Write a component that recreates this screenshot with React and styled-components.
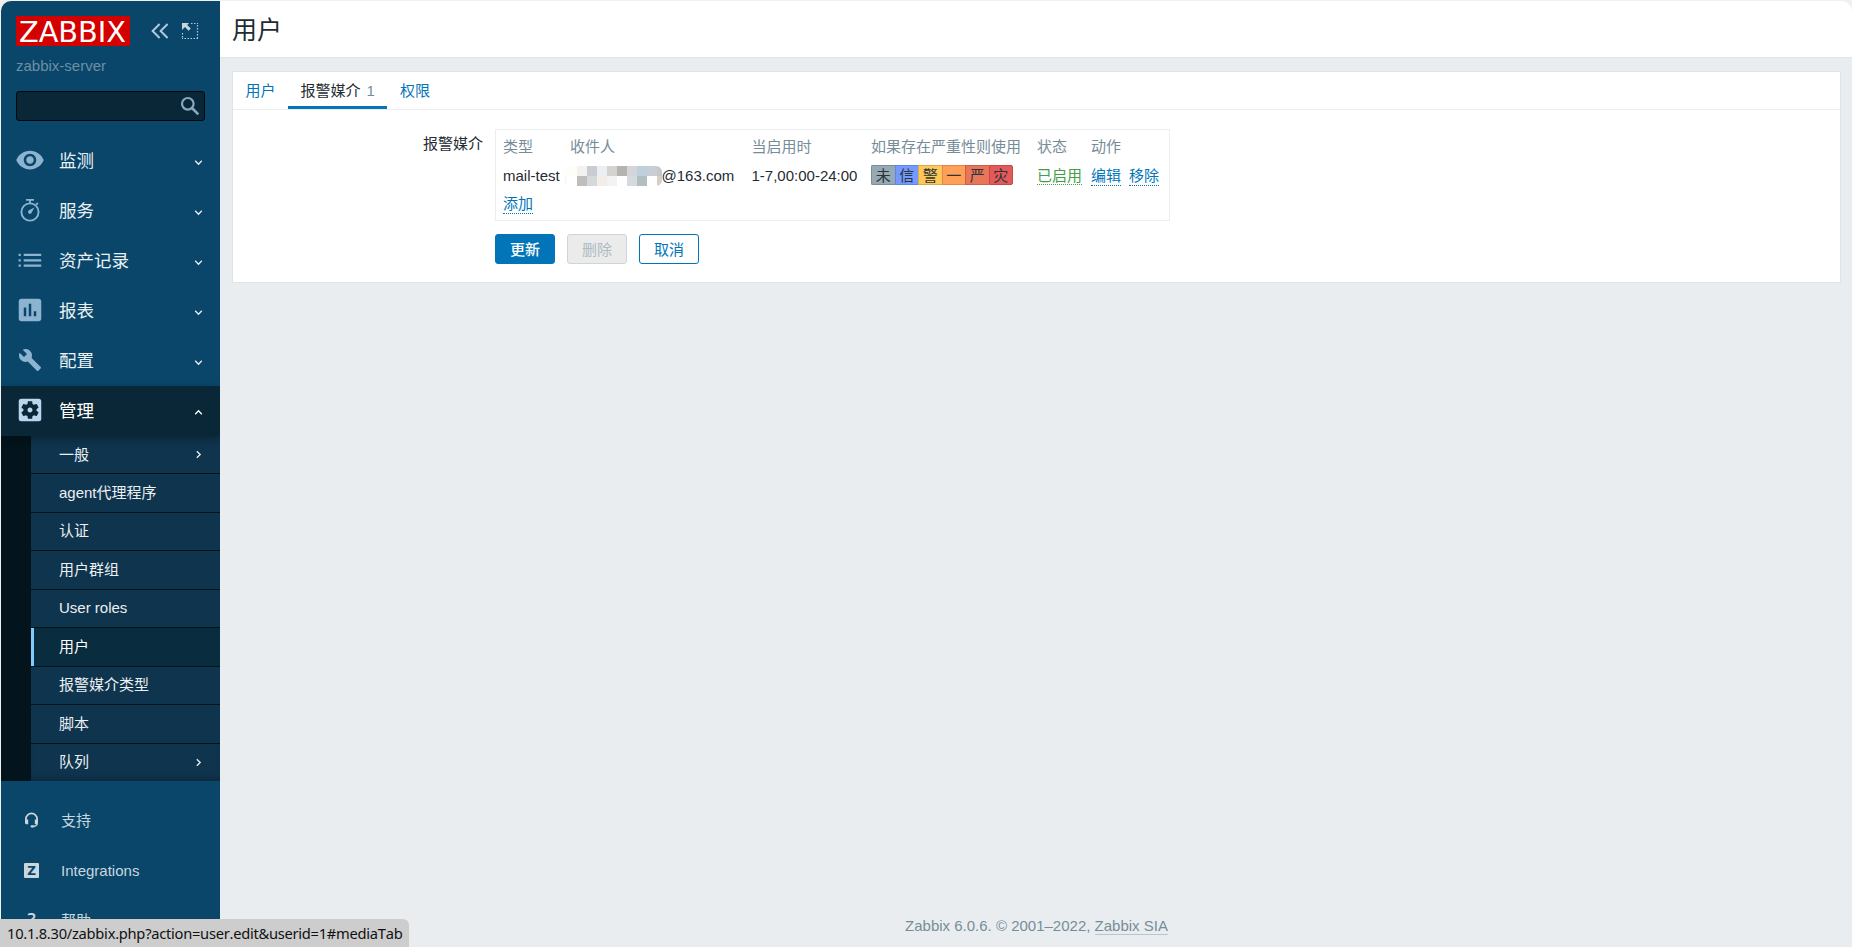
import React from 'react';
import styled, { createGlobalStyle, css } from 'styled-components';
import { MdVisibility, MdAssessment, MdBuild, MdSettingsApplications } from 'react-icons/md';

const GlobalStyle = createGlobalStyle`
  * {
    box-sizing: border-box;
  }
  body {
    margin: 0;
    overflow: hidden;
    background-color: #f0f0f0;
    color: #1f2c33;
    font-family: 'Liberation Sans', Arial, 'Noto Sans CJK SC', sans-serif;
    font-size: 15px;
    line-height: 18px;
  }
  svg {
    display: block;
    flex: none;
  }
`;

const Page = styled.div`
  display: flex;
  height: 100vh;
  padding: 1px 0 0 1px;
  overflow: hidden;
`;

/* sidebar */
const Sidebar = styled.aside`
  width: 219px;
  flex: none;
  display: flex;
  flex-direction: column;
  background-color: #0a466a;
  border-top-left-radius: 10px;
  overflow: hidden;
`;
const SidebarHeader = styled.div`
  height: 135px;
  flex: none;
  padding: 15px 15px 0;
`;
const LogoRow = styled.div`
  display: flex;
  align-items: center;
  height: 30px;
`;
const Logo = styled.svg`
  background-color: #d40000;
  margin-right: 21px;
  overflow: visible;
  text {
    font-family: 'DejaVu Sans', sans-serif;
    font-size: 28.5px;
    fill: #fff;
  }
`;
const FullscreenIcon = styled.svg`
  margin-left: 12px;
`;
const ServerName = styled.div`
  margin-top: 11px;
  color: #6c8fa6;
`;
const Search = styled.div`
  display: flex;
  align-items: center;
  justify-content: flex-end;
  width: 189px;
  height: 30px;
  margin-top: 16px;
  padding-right: 4px;
  background-color: #0a2737;
  border: 1px solid #02090e;
  border-radius: 3px;
`;
const MenuItem = styled.div`
  display: flex;
  align-items: center;
  height: 50px;
  flex: none;
  padding: 0 17px 0 14px;
  font-size: 17.5px;
  color: ${({ $active }) => ($active ? '#fff' : '#ebf0f3')};
  position: relative;
  ${({ $active }) =>
    $active &&
    css`
      background-color: #0a2737;
      box-shadow: 0 3px 8px rgba(0, 0, 0, 0.3);
      z-index: 1;
    `}
`;
const MenuIcon = styled.span`
  width: 30px;
  height: 30px;
  margin: -2px 14px 0 0;
  display: flex;
  align-items: center;
  justify-content: center;
  color: ${({ $active }) => ($active ? '#b8d6ec' : '#8cb4d0')};
`;
const MenuText = styled.span`
  flex: 1;
  line-height: 24px;
`;
const Arrow = styled.span`
  margin-top: 3px;
`;
const SubMenu = styled.div`
  flex: none;
  height: 345px;
  padding-left: 30px;
  background-color: #04141c;
`;
const SubItem = styled.div`
  display: flex;
  align-items: center;
  justify-content: space-between;
  height: 38.5px;
  padding: 0 17px 0 28px;
  color: ${({ $selected }) => ($selected ? '#fff' : '#ebf0f3')};
  background-color: ${({ $selected }) => ($selected ? '#0a2c3f' : '#0f344d')};
  border-top: 1px solid #04141c;
  ${({ $selected }) => $selected && 'box-shadow: inset 3px 0 #80ccff;'}
  &:first-child {
    height: 37px;
    border-top: 0;
  }
  &:last-child {
    box-shadow: inset 0 -7px 7px -5px rgba(0, 0, 0, 0.25);
  }
`;
const BottomMenu = styled.div`
  padding-top: 15px;
`;
const BottomItem = styled.div`
  display: flex;
  align-items: center;
  height: 50px;
  padding-left: 21px;
  color: #c8d6df;
`;
const BottomIcon = styled.span`
  width: 18px;
  height: 18px;
  margin: -3px 21px 0 0;
`;

/* content */
const Main = styled.main`
  flex: 1;
  display: flex;
  flex-direction: column;
  background-color: #e9edf0;
  border-top-right-radius: 10px;
  overflow: hidden;
`;
const Header = styled.header`
  height: 57px;
  flex: none;
  padding: 0 12px;
  background-color: #fff;
  border-bottom: 1px solid #dfe4e7;
`;
const Title = styled.h1`
  margin: 0;
  font-size: 25px;
  font-weight: normal;
  line-height: 58px;
`;
const Panel = styled.section`
  height: 212px;
  margin: 13px 11px 0 12px;
  background-color: #fff;
  border: 1px solid #dfe4e7;
`;
const Tabs = styled.nav`
  display: flex;
  height: 38px;
  border-bottom: 1px solid #ebedee;
`;
const Tab = styled.a`
  padding: 0 12.5px;
  line-height: 38px;
  height: 37px;
  color: ${({ $active }) => ($active ? '#1f2c33' : '#0275b8')};
  ${({ $active }) => $active && 'border-bottom: 3px solid #0275b8;'}
`;
const TabCount = styled.span`
  margin-left: 6px;
  color: #768d99;
`;
const FormRow = styled.div`
  display: flex;
  padding-top: 19px;
`;
const Label = styled.label`
  width: 250px;
  padding-top: 6px;
  margin-right: 12px;
  text-align: right;
`;
const MediaTable = styled.div`
  display: grid;
  grid-template-columns: 67px 181.5px 119.5px 166px 54px 79px;
  grid-template-rows: 29px 29px 27px;
  align-items: center;
  width: 675px;
  height: 92px;
  padding: 2px 0 0 7px;
  border: 1px solid #ebedee;
  white-space: nowrap;
`;
const Th = styled.span`
  color: #768d99;
`;
const Recipient = styled.span`
  display: flex;
  align-items: center;
  margin-left: -6px;
`;
const Mosaic = styled.span`
  display: grid;
  grid-template-columns: 3px repeat(9, 10px) 5px;
  grid-template-rows: 10px 10px;
  margin-right: -0.5px;
  border-radius: 6px;
  overflow: hidden;
`;
const Pixel = styled.i`
  background-color: ${({ $color }) => $color};
`;
const Severities = styled.span`
  display: flex;
  height: 20px;
  margin-top: -1px;
`;
const Severity = styled.span`
  width: ${({ $last }) => ($last ? 24.5 : 23.5)}px;
  text-align: center;
  line-height: 19px;
  color: #2a353a;
  background-color: ${({ $bg }) => $bg};
  border: 1px solid ${({ $line }) => $line};
  border-right-width: ${({ $last }) => ($last ? 1 : 0)}px;
  &:first-child {
    border-radius: 2px 0 0 2px;
  }
  &:last-child {
    border-radius: 0 2px 2px 0;
  }
`;
const Link = styled.a`
  display: inline-block;
  line-height: 19px;
  height: ${({ $green }) => ($green ? 19 : 20)}px;
  vertical-align: top;
  color: ${({ $green }) => ($green ? '#429e47' : '#0275b8')};
  border-bottom: 1px dotted;
  & + & {
    margin-left: 8px;
  }
`;
const LinkCell = styled.span`
  height: 20px;
`;
const Buttons = styled.div`
  display: flex;
  gap: 12px;
  padding: 13px 0 0 262px;
`;
const variants = {
  primary: css`
    color: #fff;
    background-color: #0275b8;
    border-color: #0275b8;
    font-weight: 500;
  `,
  disabled: css`
    color: #acbbc2;
    background-color: #ebebeb;
    border-color: #ccd5d9;
  `,
  alt: css`
    color: #0275b8;
    background-color: #fff;
    border-color: #0275b8;
  `,
};
const Button = styled.button`
  width: 60px;
  height: 30px;
  padding: 1px 0 0;
  font-family: inherit;
  font-size: 15px;
  line-height: 27px;
  border: 1px solid;
  border-radius: 3px;
  ${({ $variant }) => variants[$variant]}
`;
const Footer = styled.footer`
  margin-top: auto;
  padding: 0 0 12px 1px;
  text-align: center;
  color: #768d99;
  a {
    display: inline-block;
    border-bottom: 1px solid #b9c6cc;
    line-height: 17px;
  }
`;
const StatusBar = styled.div`
  position: fixed;
  left: 0;
  bottom: 0;
  z-index: 5;
  width: 409px;
  height: 28px;
  padding-left: 7px;
  font-family: 'Noto Sans', sans-serif;
  font-size: 14.7px;
  font-kerning: none;
  letter-spacing: -0.27px;
  line-height: 28px;
  white-space: nowrap;
  color: #111;
  background-color: #cdcdcd;
  border-top-right-radius: 6px;
`;

const Chevron = ({ rotate = 0, size = 9 }) => (
  <svg width={size} height={size} viewBox="0 0 9 9" fill="none" stroke="currentColor" strokeWidth="1.3">
    <path d="M1.2 2.8l3.3 3.4 3.3-3.4" transform={`rotate(${rotate} 4.5 4.5)`} />
  </svg>
);

const StopwatchIcon = () => (
  <svg width="30" height="30" viewBox="0 0 30 30" fill="none" stroke="currentColor">
    <circle cx="15" cy="17" r="8.6" strokeWidth="1.9" />
    <path d="M11 4.9h8M15 5v3.5M21.2 9.6l1.6-1.6" strokeWidth="1.9" />
    <path d="M19.4 12.4l-5.9 3.2a1.9 1.9 0 1 0 2.8 2.6z" fill="currentColor" stroke="none" />
  </svg>
);

const ListIcon = () => (
  <svg width="30" height="30" viewBox="0 0 30 30" fill="currentColor">
    <path d="M3.6 8.8h2.2v2.2H3.6zM8.7 8.8h17.5v2.2H8.7zM3.6 14.2h2.2v2.2H3.6zM8.7 14.2h17.5v2.2H8.7zM3.6 19.6h2.2v2.2H3.6zM8.7 19.6h17.5v2.2H8.7z" />
  </svg>
);

const HeadsetIcon = () => (
  <svg width="18" height="18" viewBox="0 0 18 18" fill="none" stroke="currentColor">
    <path d="M3.9 10.5V8a5.6 5.6 0 0 1 11.2 0v2.5" strokeWidth="1.7" />
    <path d="M3 8.6h3.2v4.7H4.6A1.6 1.6 0 0 1 3 11.7zM12.8 8.6H16v3.1a1.6 1.6 0 0 1-1.6 1.6h-1.6z" fill="currentColor" stroke="none" />
    <path d="M15.2 12.4c0 2-1.2 2.6-3 2.9" strokeWidth="1.3" />
    <rect x="8.6" y="14.2" width="4" height="2.4" rx="1.1" fill="currentColor" stroke="none" />
  </svg>
);

const ZIcon = () => (
  <svg width="18" height="18" viewBox="0 0 18 18">
    <rect x="2" y="2" width="15" height="15" rx="1" fill="currentColor" />
    <text x="9.5" y="14" textAnchor="middle" fontFamily="DejaVu Sans" fontWeight="bold" fontSize="12" fill="#0a466a">Z</text>
  </svg>
);

const HelpIcon = () => (
  <svg width="18" height="18" viewBox="0 0 18 18">
    <text x="9.5" y="15" textAnchor="middle" fontFamily="Open Sans" fontWeight="600" fontSize="18" fill="currentColor">?</text>
  </svg>
);

const menu = [
  { text: '监测', icon: <MdVisibility size={30} /> },
  { text: '服务', icon: <StopwatchIcon /> },
  { text: '资产记录', icon: <ListIcon /> },
  { text: '报表', icon: <MdAssessment size={30} /> },
  { text: '配置', icon: <MdBuild size={24} /> },
  { text: '管理', icon: <MdSettingsApplications size={30} />, active: true },
];

const subMenu = [
  { text: '一般', more: true },
  { text: 'agent代理程序' },
  { text: '认证' },
  { text: '用户群组' },
  { text: 'User roles' },
  { text: '用户', selected: true },
  { text: '报警媒介类型' },
  { text: '脚本' },
  { text: '队列', more: true },
];

const bottomMenu = [
  { text: '支持', icon: <HeadsetIcon /> },
  { text: 'Integrations', icon: <ZIcon /> },
  { text: '帮助', icon: <HelpIcon /> },
];

const severities = [
  { text: '未', bg: '#97aab3', line: '#7b8e97' },
  { text: '信', bg: '#7499ff', line: '#5f83e6' },
  { text: '警', bg: '#ffc859', line: '#d9a94c' },
  { text: '一', bg: '#ffa059', line: '#e0884a' },
  { text: '严', bg: '#e97659', line: '#c9624a' },
  { text: '灾', bg: '#e45959', line: '#c24a4a' },
];

const pixels = [
  '#fffdf8', '#fffdf8', '#f4f2ef', '#c9ccd2', '#eceef1', '#d5d3d1', '#b4b3af', '#d3d5da', '#bfcfdc', '#c9ced4', '#c4c7cb',
  '#f8f9f9', '#ffffff', '#bfbeba', '#d5d9db', '#f2ede9', '#f2f4f4', '#ffffff', '#d5dae0', '#b3bec1', '#ffffff', '#d3d0c8',
];

const App = () => {
  return (
    <Page>
      <GlobalStyle />
      <Sidebar>
        <SidebarHeader>
          <LogoRow>
            <Logo width="114" height="30">
              <text x="3" y="25.5" textLength="107" lengthAdjust="spacingAndGlyphs">ZABBIX</text>
            </Logo>
            <svg width="18" height="18" viewBox="0 0 18 18" fill="none" stroke="#b5cad8" strokeWidth="1.9">
              <path d="M8.6 2L1.6 9l7 7M16.6 2l-7 7 7 7" />
            </svg>
            <FullscreenIcon width="18" height="18" viewBox="0 0 18 18" fill="none" stroke="#b5cad8">
              <path d="M10 1.5h7M16.5 3v13M17 16.5H1M1.5 15.5V10" strokeWidth="1.2" strokeDasharray="1.5 1.5" />
              <path d="M1 1h7L6.2 2.9l3.6 3.6-2.2 2.2L4 5 1 8z" fill="#c6d6e0" stroke="none" />
            </FullscreenIcon>
          </LogoRow>
          <ServerName>zabbix-server</ServerName>
          <Search>
            <svg width="20" height="20" viewBox="0 0 20 20" fill="none" stroke="#86a9c0">
              <circle cx="7.8" cy="7.8" r="5.8" strokeWidth="2.2" />
              <path d="M12 12l6.3 6.3" strokeWidth="2.6" />
            </svg>
          </Search>
        </SidebarHeader>
        {menu.map((item) => (
          <MenuItem key={item.text} $active={item.active}>
            <MenuIcon $active={item.active}>{item.icon}</MenuIcon>
            <MenuText>{item.text}</MenuText>
            <Arrow>
              <Chevron rotate={item.active ? 180 : 0} />
            </Arrow>
          </MenuItem>
        ))}
        <SubMenu>
          {subMenu.map((item) => (
            <SubItem key={item.text} $selected={item.selected}>
              {item.text}
              {item.more && <Chevron rotate={-90} />}
            </SubItem>
          ))}
        </SubMenu>
        <BottomMenu>
          {bottomMenu.map((item) => (
            <BottomItem key={item.text}>
              <BottomIcon>{item.icon}</BottomIcon>
              {item.text}
            </BottomItem>
          ))}
        </BottomMenu>
      </Sidebar>
      <Main>
        <Header>
          <Title>用户</Title>
        </Header>
        <Panel>
          <Tabs>
            <Tab>用户</Tab>
            <Tab $active>
              报警媒介<TabCount>1</TabCount>
            </Tab>
            <Tab>权限</Tab>
          </Tabs>
          <FormRow>
            <Label>报警媒介</Label>
            <MediaTable>
              <Th>类型</Th>
              <Th>收件人</Th>
              <Th>当启用时</Th>
              <Th>如果存在严重性则使用</Th>
              <Th>状态</Th>
              <Th>动作</Th>
              <span>mail-test</span>
              <Recipient>
                <Mosaic>
                  {pixels.map((color, i) => (
                    <Pixel key={i} $color={color} />
                  ))}
                </Mosaic>
                @163.com
              </Recipient>
              <span>1-7,00:00-24:00</span>
              <Severities>
                {severities.map((s, i) => (
                  <Severity key={s.text} $bg={s.bg} $line={s.line} $last={i === severities.length - 1}>
                    {s.text}
                  </Severity>
                ))}
              </Severities>
              <LinkCell>
                <Link $green>已启用</Link>
              </LinkCell>
              <LinkCell>
                <Link>编辑</Link>
                <Link>移除</Link>
              </LinkCell>
              <LinkCell>
                <Link>添加</Link>
              </LinkCell>
            </MediaTable>
          </FormRow>
          <Buttons>
            <Button $variant="primary">更新</Button>
            <Button $variant="disabled">删除</Button>
            <Button $variant="alt">取消</Button>
          </Buttons>
        </Panel>
        <Footer>
          Zabbix 6.0.6. © 2001–2022, <a>Zabbix SIA</a>
        </Footer>
      </Main>
      <StatusBar>10.1.8.30/zabbix.php?action=user.edit&amp;userid=1#mediaTab</StatusBar>
    </Page>
  );
};

export default App;
